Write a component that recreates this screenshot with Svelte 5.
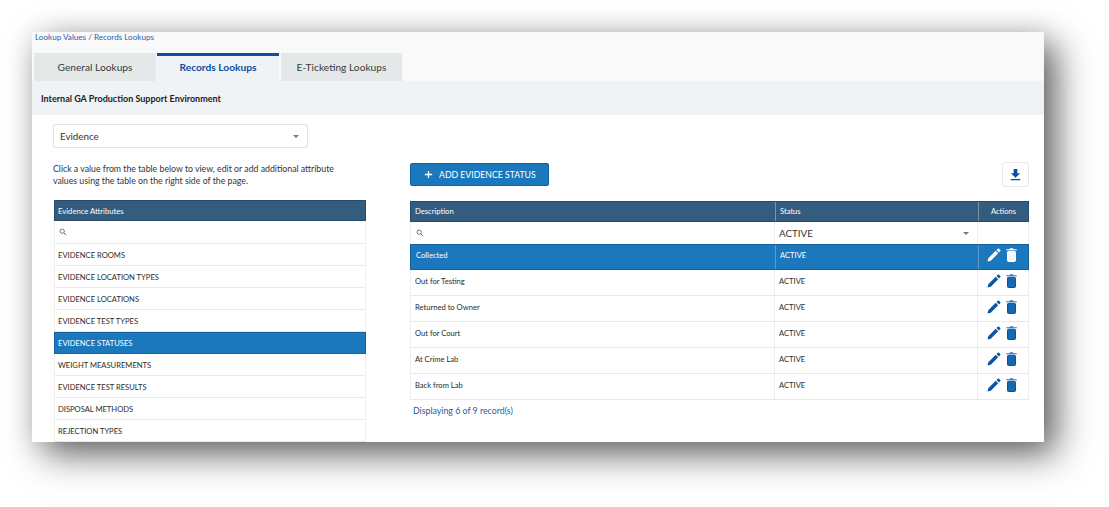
<script>
  const attrs = ['EVIDENCE ROOMS','EVIDENCE LOCATION TYPES','EVIDENCE LOCATIONS','EVIDENCE TEST TYPES','EVIDENCE STATUSES','WEIGHT MEASUREMENTS','EVIDENCE TEST RESULTS','DISPOSAL METHODS','REJECTION TYPES'];
  const rows = ['Collected','Out for Testing','Returned to Owner','Out for Court','At Crime Lab','Back from Lab'];
</script>

<div class="stage">
  <main class="card">
    <div class="top">
      <div class="crumb">Lookup Values / Records Lookups</div>
      <div class="tabs">
        <div class="tab t1">General Lookups</div>
        <div class="tab t2 active">Records Lookups</div>
        <div class="tab t3">E-Ticketing Lookups</div>
      </div>
    </div>
    <div class="env">Internal GA Production Support Environment</div>
    <div class="body">
      <section class="left">
        <div class="select"><span>Evidence</span><i class="caret"></i></div>
        <p class="help">Click a value from the table below to view, edit or add additional attribute values using the table on the right side of the page.</p>
        <div class="ltable">
          <div class="head">Evidence Attributes</div>
          <div class="searchrow">
            <svg class="search" viewBox="0 0 10 10"><circle cx="4" cy="4" r="2.7" fill="none" stroke="#666" stroke-width="1.1"/><path d="M6 6l3 3" stroke="#666" stroke-width="1.2"/></svg>
          </div>
          {#each attrs as a, i}
            <div class="lrow" class:sel={i === 4}>{a}</div>
          {/each}
        </div>
      </section>
      <section class="right">
        <div class="actions">
          <button class="add"><svg viewBox="0 0 10 10"><path d="M5 1v8M1 5h8" stroke="#fff" stroke-width="1.4"/></svg>ADD EVIDENCE STATUS</button>
          <button class="dl" aria-label="Download">
            <svg viewBox="0 0 12 14"><path d="M4 1h4v4.5h3L6 10.5 1 5.500h3zM.8 12h10.400v1.400H.8z" fill="#0b4ea2"/></svg>
          </button>
        </div>
        <div class="rtable">
          <div class="rhead">
            <div class="c1">Description</div><div class="c2">Status</div><div class="c3 center">Actions</div>
          </div>
          <div class="filter">
            <div class="c1"><svg class="search" viewBox="0 0 10 10"><circle cx="4" cy="4" r="2.7" fill="none" stroke="#666" stroke-width="1.1"/><path d="M6 6l3 3" stroke="#666" stroke-width="1.2"/></svg></div>
            <div class="c2 fstatus"><span>ACTIVE</span><i class="caret"></i></div>
            <div class="c3"></div>
          </div>
          {#each rows as r, i}
            <div class="row" class:sel={i === 0}>
              <div class="c1">{r}</div>
              <div class="c2">ACTIVE</div>
              <div class="c3 icons">
                <svg class="pen" viewBox="0 0 14 14"><path d="M.5 13.500l.8-3.300 7.400-7.400 2.500 2.500-7.400 7.400zM9.500 2l1.200-1.200a1 1 0 0 1 1.400 0l1.100 1.100a1 1 0 0 1 0 1.400L12 4.500z" fill="currentColor"/></svg>
                <svg class="bin" viewBox="0 0 11 14"><path d="M4 .3h3l.4.9H10.800v1.100H.2V1.200h3.400z" class="lid"/><rect x="1.500" y="3.300" width="8" height="10.200" rx="1" class="can"/></svg>
              </div>
            </div>
          {/each}
        </div>
        <div class="count">Displaying 6 of 9 record(s)</div>
      </section>
    </div>
  </main>
</div>

<style>
  :global(body) { margin: 0; background: #fff; }
  .stage { width: 1109px; height: 507px; padding: 32px 0 0 32px; box-sizing: border-box; overflow: hidden; font-family: Lato, "Liberation Sans", sans-serif; color: #2b2b2b; }
  .card { width: 1012px; height: 410px; background: #fff; overflow: hidden; box-shadow: 12px 12px 34px rgba(0,0,0,.62), 0 0 24px rgba(0,0,0,.08); }
  .top { height: 49px; background: #f9f9f9; padding: 0 0 0 3px; display: flex; flex-direction: column; }
  .crumb { font-size: 8.100px; line-height: 11px; color: #2a62a8; height: 21px; box-sizing: border-box; }
  .tabs { display: flex; height: 28px; gap: 1px; margin-left: -1px; }
  .tab { background: #e5e8e9; font-size: 10.200px; display: flex; align-items: center; justify-content: center; color: #3a3a3a; box-sizing: border-box; }
  .t1 { width: 122px; }
  .t2 { width: 122px; }
  .t3 { width: 121px; margin-left: 1px; }
  .tab.active { background: #eff3f6; border-top: 3px solid #0b4ea2; color: #0b4ea2; font-weight: 700; padding-bottom: 3px; }
  .env { height: 34px; background: #eff3f6; font-size: 9px; font-weight: 700; display: flex; align-items: center; padding-left: 9px; color: #222; }
  .body { display: flex; padding-left: 21px; }
  .left { width: 313px; margin-right: 44px; padding-top: 9px; flex: none; }
  .select { width: 255px; height: 24px; box-sizing: border-box; border: 1px solid #dfe3e6; border-radius: 3px; display: flex; align-items: center; justify-content: space-between; padding: 0 8px 0 6px; font-size: 9.800px; color: #333; box-shadow: 0 0 1px #ddd; }
  .caret { width: 0; height: 0; border: 3.500px solid transparent; border-top: 3.500px solid #777; border-bottom: 0; }
  .help { margin: 15px 0 0; font-size: 8.750px; line-height: 12px; width: 290px; color: #333; }
  .ltable { margin: 13px 0 0 1px; width: 312px; border-right: 1px solid #eee; border-left: 1px solid #eee; box-sizing: border-box; }
  .head { margin: 0 -1px; height: 21px; background: #335c7f; border: 1px solid #2a4a68; box-sizing: border-box; color: #fff; font-size: 7.700px; display: flex; align-items: center; padding-left: 3px; }
  .searchrow { height: 23px; display: flex; align-items: center; padding-left: 4px; border-bottom: 1px solid #e8e8e8; box-sizing: border-box; }
  .search { width: 8px; height: 8px; }
  .lrow { height: 22px; box-sizing: border-box; border-bottom: 1px solid #e8e8e8; display: flex; align-items: center; padding-left: 3px; font-size: 7.600px; color: #2b2b2b; }
  .lrow.sel { background: #1c78bd; color: #fff; border: 1px solid #14609c; margin: 0 -1px; }
  .right { width: 619px; flex: none; padding-top: 47px; }
  .actions { display: flex; justify-content: space-between; align-items: center; height: 25px; }
  .add { width: 139px; height: 23px; background: #1c78bd; border: 1px solid #14609c; border-radius: 2px; color: #fff; font: 8.700px Lato, sans-serif; display: flex; align-items: center; padding: 0 0 0 13px; gap: 6px; }
  .add svg { width: 9px; height: 9px; }
  .dl { width: 27px; height: 25px; background: #fff; border: 1px solid #e6e8ea; border-radius: 3px; padding: 0; display: flex; align-items: center; justify-content: center; }
  .dl svg { width: 11px; height: 13px; }
  .rtable { margin-top: 14px; font-size: 7.600px; }
  .rhead, .filter, .row { display: grid; grid-template-columns: 365px 203px 51px; }
  .rhead { height: 21px; background: #335c7f; border: 1px solid #2a4a68; box-sizing: border-box; color: #fff; align-items: center; grid-template-columns: 364px 203px 50px; }
  .rhead .c1 { padding: 0 0 2px 4px; }
  .rhead .c2 { padding: 0 0 2px 4px; }
  .rhead .c3 { padding-bottom: 2px; }
  .rhead .c2, .rhead .c3 { border-left: 1px solid #7c93a8; height: 100%; display: flex; align-items: center; box-sizing: border-box; }
  .center { justify-content: center; }
  .filter { height: 22px; }
  .filter > div { border-right: 1px solid #eee; box-sizing: border-box; display: flex; align-items: center; }
  .filter > .c1 { padding-left: 5px; border-left: 1px solid #eee; }
  .fstatus { justify-content: space-between; padding: 0 8px 0 4px; font-size: 9.800px; color: #333; }
  .row { height: 26px; border-bottom: 1px solid #e8e8e8; box-sizing: border-box; }
  .row > div { box-sizing: border-box; border-right: 1px solid #eee; padding: 7px 0 0 4px; color: #2b2b2b; line-height: 9px; }
  .row > .c1 { border-left: 1px solid #eee; }
  .row.sel { background: #1c78bd; border: 1px solid #14609c; grid-template-columns: 364px 203px 50px; }
  .row.sel > div { color: #fff; border-color: transparent; padding-top: 6px; }
  .row.sel > .c2, .row.sel > .c3 { border-left: 1px solid #5a9bcd; border-right: 0; }
  .row > .icons { display: flex; justify-content: center; gap: 5px; padding: 0 3px 4px 0; align-items: center; color: #0b55a4; }
  .row.sel > .icons { color: #fff; padding: 0 3px 4px 0; }
  .pen { width: 14px; height: 14px; }
  .bin { width: 11px; height: 14px; }
  .lid { fill: currentColor; opacity: .8; }
  .can { fill: #1668b0; stroke: #0b4ea2; stroke-width: 1; }
  .row.sel .lid { fill: #fff; opacity: 1; }
  .row.sel .can { fill: #f4f8fb; stroke: #fff; }
  .count { margin-top: 5px; padding-left: 3px; font-size: 8.800px; line-height: 11px; color: #1f5c9e; }
</style>
